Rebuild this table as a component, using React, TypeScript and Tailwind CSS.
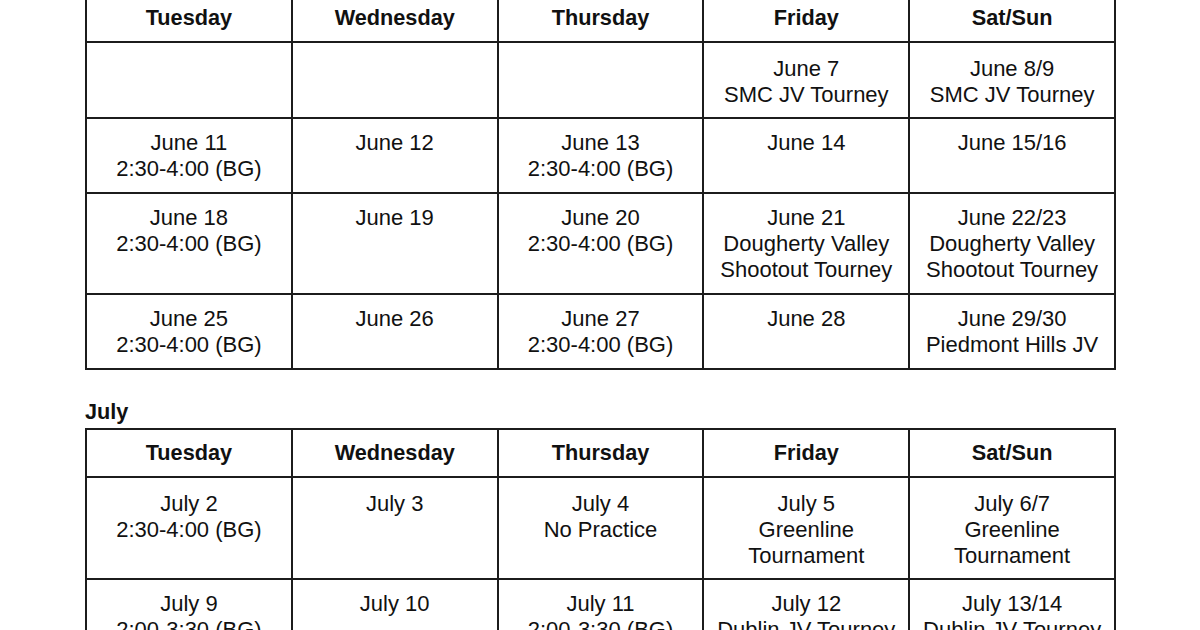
const days = ['Tuesday', 'Wednesday', 'Thursday', 'Friday', 'Sat/Sun'];

const june: string[][][] = [
  [[], [], [], ['June 7', 'SMC JV Tourney'], ['June 8/9', 'SMC JV Tourney']],
  [['June 11', '2:30-4:00 (BG)'], ['June 12'], ['June 13', '2:30-4:00 (BG)'], ['June 14'], ['June 15/16']],
  [
    ['June 18', '2:30-4:00 (BG)'],
    ['June 19'],
    ['June 20', '2:30-4:00 (BG)'],
    ['June 21', 'Dougherty Valley', 'Shootout Tourney'],
    ['June 22/23', 'Dougherty Valley', 'Shootout Tourney'],
  ],
  [['June 25', '2:30-4:00 (BG)'], ['June 26'], ['June 27', '2:30-4:00 (BG)'], ['June 28'], ['June 29/30', 'Piedmont Hills JV']],
];

const july: string[][][] = [
  [
    ['July 2', '2:30-4:00 (BG)'],
    ['July 3'],
    ['July 4', 'No Practice'],
    ['July 5', 'Greenline', 'Tournament'],
    ['July 6/7', 'Greenline', 'Tournament'],
  ],
  [
    ['July 9', '2:00-3:30 (BG)'],
    ['July 10'],
    ['July 11', '2:00-3:30 (BG)'],
    ['July 12', 'Dublin JV Tourney'],
    ['July 13/14', 'Dublin JV Tourney'],
  ],
];

function Schedule({ rows, className }: { rows: string[][][]; className?: string }) {
  return (
    <table className={`w-[1031px] table-fixed border-collapse ${className ?? ''}`}>
      <thead>
        <tr>
          {days.map((d) => (
            <th
              key={d}
              className="border-2 border-[#1c1c1c] pt-[10px] pb-[10px] text-center text-[21.7px] leading-[26px] font-bold"
            >
              {d}
            </th>
          ))}
        </tr>
      </thead>
      <tbody>
        {rows.map((row, i) => (
          <tr key={i}>
            {row.map((cell, j) => (
              <td
                key={j}
                className={`border-2 border-[#1c1c1c] text-center align-top text-[22px] leading-[26px] ${
                  i === 0 ? 'h-[76px] pt-[13px] pb-[9px]' : 'pt-[11px] pb-[10px]'
                }`}
              >
                {cell.map((line, k) => (
                  <div key={k}>{line}</div>
                ))}
              </td>
            ))}
          </tr>
        ))}
      </tbody>
    </table>
  );
}

export default function App() {
  return (
    <div
      className="h-[630px] overflow-hidden bg-white pl-[85px] text-[#111]"
      style={{ fontFamily: '"Liberation Sans", Arial, sans-serif' }}
    >
      <Schedule rows={june} className="-mt-[7px]" />
      <div className="mt-[29px] mb-[3px] text-[21.7px] leading-[26px] font-bold">July</div>
      <Schedule rows={july} />
    </div>
  );
}
